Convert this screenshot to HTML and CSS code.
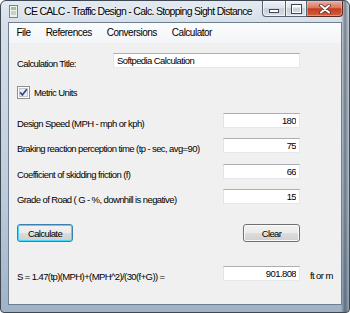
FILE: index.html
```html
<!doctype html>
<html lang="en">
  <head>
    <meta charset="UTF-8" />
    <title>CE CALC - Traffic Design - Calc. Stopping Sight Distance</title>
    <link rel="stylesheet" href="styles.css">
  </head>
  <body>
    <div class="window">
      <div class="titlebar">
        <svg class="app-icon" width="9" height="13" viewBox="0 0 9 13">
          <rect x="0.5" y="0.5" width="8" height="12" fill="#eef0ea" stroke="#7d857f" />
          <rect x="2" y="2" width="5" height="3" fill="#9fc39a" />
          <line x1="2" y1="7" x2="7" y2="7" stroke="#a9b0aa" />
          <line x1="2" y1="9" x2="7" y2="9" stroke="#a9b0aa" />
        </svg>
        <span class="title">CE CALC - Traffic Design - Calc. Stopping Sight Distance</span>
        <div class="caption-buttons">
          <div class="cap cap-min"><span class="min-glyph"></span></div>
          <div class="cap cap-max"><span class="max-glyph"></span></div>
          <div class="cap cap-close">
            <svg width="12" height="10" viewBox="0 0 12 10">
              <path d="M2 1.5 L10 8.5 M10 1.5 L2 8.5" stroke="#5a2a20" stroke-width="3.6" stroke-linecap="round" />
              <path d="M2 1.5 L10 8.5 M10 1.5 L2 8.5" stroke="#ffffff" stroke-width="2" stroke-linecap="round" />
            </svg>
          </div>
        </div>
      </div>

      <div class="client">
        <div class="menubar">
          <span class="menu-item">File</span>
          <span class="menu-item">References</span>
          <span class="menu-item">Conversions</span>
          <span class="menu-item">Calculator</span>
        </div>

        <div class="form">
          <div class="row row-title">
            <label class="label label-short">Calculation Title:</label>
            <input class="text text-wide" type="text" value="Softpedia Calculation" />
          </div>

          <div class="row-check">
            <svg class="check" width="13" height="13" viewBox="0 0 13 13">
              <rect x="0.5" y="0.5" width="12" height="12" fill="#ffffff" stroke="#8e8f8f" />
              <rect x="2.5" y="2.5" width="8" height="8" fill="#e9ecf0" stroke="#c3c7cc" />
              <path d="M3.2 6.4 L5.4 9 L9.8 3.2" fill="none" stroke="#33468a" stroke-width="1.7" />
            </svg>
            <span class="check-text">Metric Units</span>
          </div>

          <div class="row row-first">
            <label class="label">Design Speed (MPH - mph or kph)</label>
            <input class="text num" type="text" value="180" />
          </div>
          <div class="row row-next">
            <label class="label">Braking reaction perception time (tp - sec, avg=90)</label>
            <input class="text num" type="text" value="75" />
          </div>
          <div class="row row-next2">
            <label class="label">Coefficient of skidding friction (f)</label>
            <input class="text num" type="text" value="66" />
          </div>
          <div class="row row-next">
            <label class="label">Grade of Road ( G - %, downhill is negative)</label>
            <input class="text num" type="text" value="15" />
          </div>

          <div class="button-row">
            <button class="btn btn-default">Calculate</button>
            <button class="btn">Clear</button>
          </div>

          <div class="row row-result">
            <label class="label">S = 1.47(tp)(MPH)+(MPH^2)/(30(f+G)) =</label>
            <input class="text num" type="text" value="901.808" />
            <span class="unit">ft or m</span>
          </div>
        </div>
      </div>
    </div>
  </body>
</html>
```

FILE: styles.css
```css
body {
  margin: 0;
  background: #ffffff;
  font-family: "Liberation Sans", Arial, sans-serif;
}
.window {
  width: 350px;
  height: 313px;
  box-sizing: border-box;
  border: 1px solid #3e4853;
  border-radius: 6px 6px 4px 4px;
  background:
    linear-gradient(to right, rgba(0, 0, 0, 0) 0, rgba(0, 0, 0, 0) 340px, rgba(40, 50, 62, 0.55) 344px, rgba(40, 50, 62, 0.1) 348px),
    linear-gradient(to bottom, #e2e9f0 0, #d6dfe9 22px, #bccbdb 200px, #9fb2c6 100%);
  display: flex;
  flex-direction: column;
  overflow: hidden;
}
.titlebar {
  height: 21px;
  display: flex;
  align-items: flex-start;
  flex-shrink: 0;
}
.app-icon {
  margin: 4px 0 0 8px;
  flex-shrink: 0;
}
.title {
  margin: 4px 0 0 6px;
  font-size: 10.5px;
  letter-spacing: -0.7px;
  line-height: 13px;
  color: #000000;
  white-space: nowrap;
  text-shadow: 0 0 6px #ffffff, 0 0 3px #ffffff;
}
.caption-buttons {
  margin-left: auto;
  margin-right: 6px;
  display: flex;
  flex-shrink: 0;
}
.cap {
  height: 16px;
  box-sizing: border-box;
  border: 1px solid #57636f;
  border-top: none;
  display: flex;
  align-items: center;
  justify-content: center;
  background: linear-gradient(#eef2f6 0%, #dde4ec 45%, #c5d0dc 52%, #d8e1ea 100%);
  box-shadow: inset 0 0 0 1px rgba(255, 255, 255, 0.6);
}
.cap-min {
  width: 24px;
  border-radius: 0 0 0 4px;
}
.cap-max {
  width: 21px;
  border-left: none;
}
.cap-close {
  width: 36px;
  border-left: none;
  border-color: #5d2a22;
  border-radius: 0 0 4px 0;
  background: linear-gradient(#eab0a2 0%, #d77760 45%, #c13d20 52%, #d4603f 100%);
  box-shadow: inset 0 0 0 1px rgba(255, 200, 190, 0.45);
}
.min-glyph {
  width: 8px;
  height: 2px;
  margin-top: 5px;
  background: #ffffff;
  border: 1px solid #3c4650;
}
.max-glyph {
  width: 7px;
  height: 5px;
  border: 1px solid #ffffff;
  border-top-width: 2px;
  outline: 1px solid #3c4650;
}
.client {
  flex: 1;
  margin: 0 7px 7px 7px;
  border: 1px solid #6f7f90;
  background: #f0f0f0;
  display: flex;
  flex-direction: column;
}
.menubar {
  height: 19px;
  display: flex;
  align-items: center;
  background: linear-gradient(#fbfcfd, #f3f5f8);
  border-bottom: 1px solid #f4f6f9;
}
.menu-item {
  padding: 0 7.5px;
  font-size: 10px;
  letter-spacing: -0.5px;
  color: #000000;
}
.form {
  padding: 0 0 0 8px;
  font-size: 9.5px;
  letter-spacing: -0.6px;
  color: #000000;
}
.row {
  display: flex;
  align-items: flex-end;
  height: 15px;
}
.label {
  width: 206px;
  flex-shrink: 0;
  line-height: 12px;
  margin-bottom: -2px;
  white-space: nowrap;
}
.label-short {
  width: 96px;
}
.text {
  height: 15px;
  box-sizing: border-box;
  margin: 0;
  padding: 0 3px;
  border: 1px solid #e3e9ef;
  border-top-color: #abadb3;
  border-left-color: #e2e3ea;
  background: #ffffff;
  font-family: inherit;
  font-size: inherit;
  letter-spacing: inherit;
  color: #000000;
  width: 77px;
}
.text-wide {
  width: 187px;
}
.num {
  text-align: right;
}
.row-title {
  margin-top: 10px;
}
.row-check {
  margin-top: 18px;
  height: 13px;
  display: flex;
  align-items: center;
}
.check-text {
  margin-left: 4px;
}
.row-first {
  margin-top: 14px;
}
.row-next {
  margin-top: 10px;
}
.row-next2 {
  margin-top: 11px;
}
.button-row {
  margin-top: 20px;
  width: 283px;
  display: flex;
  justify-content: space-between;
}
.btn {
  width: 57px;
  height: 18px;
  padding: 0;
  border: 1px solid #707070;
  border-radius: 3px;
  background: linear-gradient(#f2f2f2 0%, #ebebeb 48%, #dddddd 52%, #cfcfcf 100%);
  box-shadow: inset 0 0 0 1px #fbfbfb;
  font-family: inherit;
  font-size: inherit;
  letter-spacing: inherit;
  color: #000000;
}
.btn-default {
  width: 56px;
  border-color: #3c7fb1;
  box-shadow: inset 0 0 0 1px #48d8fb;
}
.row-result {
  margin-top: 24px;
}
.unit {
  margin-left: 10px;
  line-height: 12px;
  margin-bottom: -1px;
}
```
